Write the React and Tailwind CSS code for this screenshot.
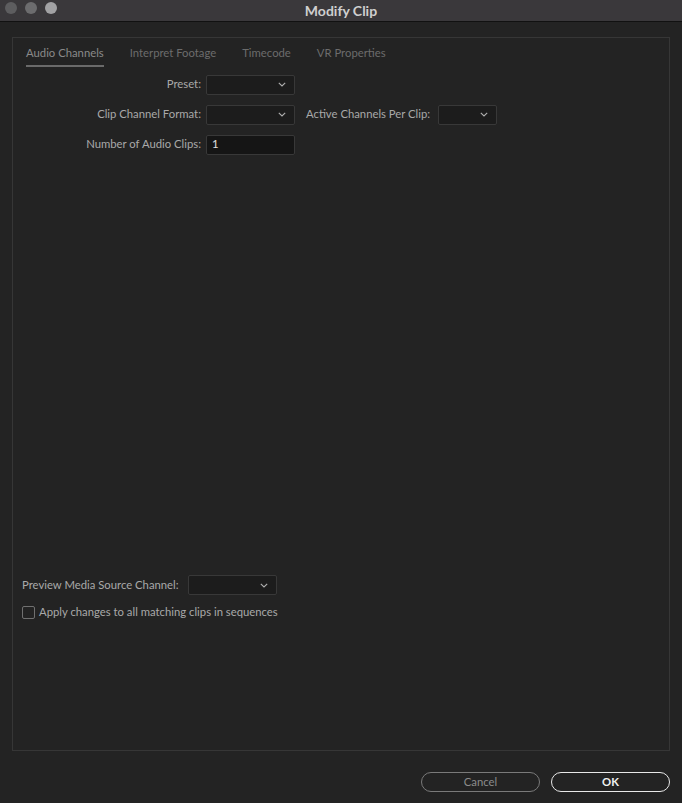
function Chevron() {
  return (
    <svg width="8" height="5" viewBox="0 0 8 5" className="shrink-0">
      <polyline points="0.8,0.8 4,4 7.2,0.8" fill="none" stroke="#b0b0b0" strokeWidth="1.1" />
    </svg>
  );
}

function Select({ width }) {
  return (
    <div
      className={`${width} h-[20px] flex items-center justify-end pr-[8px] bg-[#1c1c1c] border border-[#383838] rounded-[2px]`}
    >
      <Chevron />
    </div>
  );
}

function Label({ children, className = '' }) {
  return <span className={`text-[#a9a9a9] whitespace-nowrap ${className}`}>{children}</span>;
}

export default function App() {
  const tabs = ['Audio Channels', 'Interpret Footage', 'Timecode', 'VR Properties'];
  return (
    <div
      className="w-[682px] h-[803px] flex flex-col bg-[#232323] text-[11.3px] overflow-hidden"
      style={{ fontFamily: 'Lato, "Open Sans", sans-serif' }}
    >
      {/* title bar */}
      <div className="relative h-[22px] shrink-0 flex items-center justify-center bg-[#3a383b] border-b border-[#111]">
        <div className="absolute left-[5px] top-[2px] flex gap-[8px]">
          <div className="w-[12px] h-[12px] rounded-full bg-[#5d5d5f]" />
          <div className="w-[12px] h-[12px] rounded-full bg-[#6c6c6e]" />
          <div className="w-[12px] h-[12px] rounded-full bg-[#a2a2a4]" />
        </div>
        <span className="text-[14px] font-bold text-[#cfcfcf]">Modify Clip</span>
      </div>

      <div className="flex-1 flex flex-col px-[12px] pt-[15px]">
        {/* panel */}
        <div className="flex-1 flex flex-col border border-[#363636]">
          <div className="flex gap-[26px] pl-[13px] pt-[7px]">
            {tabs.map((t, i) => (
              <div key={t} className="flex flex-col">
                <span className={i === 0 ? 'text-[#8a8a8a]' : 'text-[#6c6c6c]'}>{t}</span>
                <div className={`h-[2px] mt-[3px] ${i === 0 ? 'bg-[#6a6a6a]' : 'bg-transparent'}`} />
              </div>
            ))}
          </div>

          <div className="flex flex-col gap-[10px] mt-[8px]">
            <div className="flex items-center">
              <Label className="w-[193px] text-right pr-[5px]">Preset:</Label>
              <Select width="w-[89px]" />
            </div>
            <div className="flex items-center">
              <Label className="w-[193px] text-right pr-[5px]">Clip Channel Format:</Label>
              <Select width="w-[89px]" />
              <Label className="ml-[11px] mr-[10px] w-[122px]">Active Channels Per Clip:</Label>
              <Select width="w-[59px]" />
            </div>
            <div className="flex items-center">
              <Label className="w-[193px] text-right pr-[5px]">Number of Audio Clips:</Label>
              <div className="w-[89px] h-[20px] flex items-center pl-[5px] bg-[#151515] border border-[#383838] rounded-[2px] text-[#e0e0e0]">
                1
              </div>
            </div>
          </div>

          <div className="flex-1" />

          <div className="flex flex-col gap-[9px] pl-[9px] pb-[129px]">
            <div className="flex items-center">
              <Label className="w-[166px]">Preview Media Source Channel:</Label>
              <Select width="w-[89px]" />
            </div>
            <div className="flex items-center gap-[4px]">
              <div className="w-[13px] h-[13px] border-[1.5px] border-[#707070] rounded-[2px]" />
              <Label>Apply changes to all matching clips in sequences</Label>
            </div>
          </div>
        </div>

        {/* buttons */}
        <div className="flex justify-end gap-[11px] pt-[21px] pb-[11px]">
          <button className="w-[119px] h-[20px] rounded-full border-[1.5px] border-[#7a7a7a] text-[#8c8c8c] flex items-center justify-center">
            Cancel
          </button>
          <button className="w-[119px] h-[20px] rounded-full border-[1.5px] border-[#e8e8e8] text-[#f0f0f0] font-bold flex items-center justify-center">
            OK
          </button>
        </div>
      </div>
    </div>
  );
}
